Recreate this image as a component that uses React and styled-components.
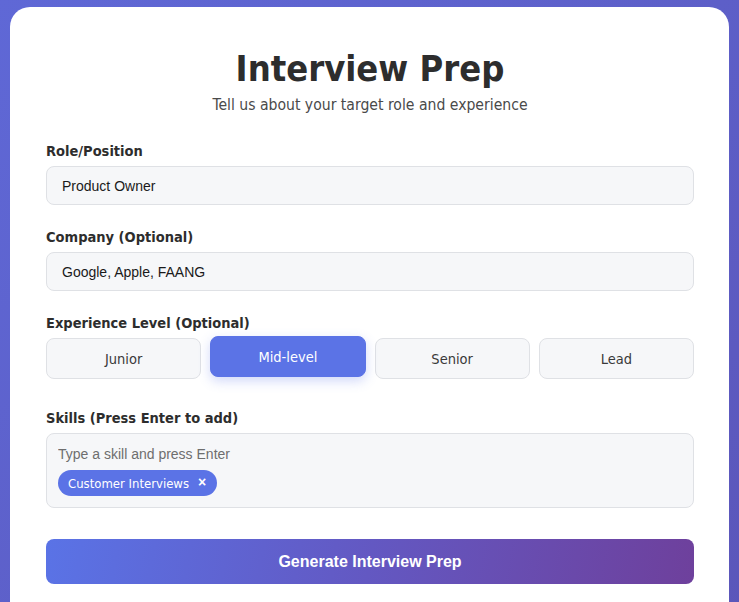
import React from 'react'
import styled, { createGlobalStyle } from 'styled-components';

const Global = createGlobalStyle`
  html, body { margin: 0; padding: 0; }
  body {
    font-family: 'DejaVu Sans Condensed', 'DejaVu Sans', sans-serif;
    background: linear-gradient(135deg, #5f68d6 0%, #5d5fc8 50%, #5b55b8 100%);
    min-height: 100vh;
  }
  * { box-sizing: border-box; }
`;

const levels = ['Junior', 'Mid-level', 'Senior', 'Lead'];

function App() {
  return (
    <Page>
      <Global />
      <Card>
        <Header>
          <h1>Interview Prep</h1>
          <p>Tell us about your target role and experience</p>
        </Header>

        <Group>
          <Label>Role/Position</Label>
          <Input defaultValue="Product Owner" />
        </Group>

        <Group>
          <Label>Company (Optional)</Label>
          <Input defaultValue="Google, Apple, FAANG" />
        </Group>

        <Group $gap="31px">
          <Label>Experience Level (Optional)</Label>
          <Levels>
            {levels.map(l => (
              <LevelButton key={l} $active={l === 'Mid-level'}>{l}</LevelButton>
            ))}
          </Levels>
        </Group>

        <Group $gap="31px">
          <Label>Skills (Press Enter to add)</Label>
          <SkillsBox>
            <SkillInput placeholder="Type a skill and press Enter" />
            <Tags>
              <Tag>
                Customer Interviews
                <Remove>×</Remove>
              </Tag>
            </Tags>
          </SkillsBox>
        </Group>

        <Submit>Generate Interview Prep</Submit>
      </Card>
    </Page>
  )
}

const Page = styled.div`
    padding: 7px 10px 0;
`;

const Card = styled.div`
    background: #fff;
    border-radius: 20px;
    padding: 40px 35px 40px 36px;
    min-height: 700px;
`;

const Header = styled.div`
    text-align: center;
    margin-bottom: 29px;
    h1 {
        margin: 0;
        font-size: 36px;
        font-weight: bold;
        color: #2d2d2d;
        line-height: 44px;
    }
    p {
        margin: 5px 0 0;
        font-size: 15.6px;
        color: #4a4a4a;
    }
`;

const Group = styled.div`
    margin-bottom: ${p => p.$gap || '24px'};
`;

const Label = styled.label`
    display: block;
    font-size: 14.5px;
    font-weight: bold;
    color: #2d2d2d;
    margin-bottom: 7px;
`;

const Input = styled.input`
    display: block;
    width: 100%;
    height: 39px;
    padding: 0 15px;
    border: 1px solid #dfe1e5;
    border-radius: 8px;
    background: #f6f7f9;
    font-family: 'Liberation Sans', Arial, sans-serif;
    font-size: 14px;
    color: #1a1a1a;
    outline: none;
`;

const Levels = styled.div`
    display: grid;
    grid-template-columns: repeat(4, 1fr);
    gap: 9px;
`;

const LevelButton = styled.button`
    height: 41px;
    border-radius: 8px;
    font-family: inherit;
    font-size: 14.5px;
    cursor: pointer;
    border: 1px solid ${p => p.$active ? '#5b73e6' : '#dfe1e5'};
    background: ${p => p.$active ? '#5b73e6' : '#f6f7f9'};
    color: ${p => p.$active ? '#fff' : '#3a3a3a'};
    transform: ${p => p.$active ? 'translateY(-2px)' : 'none'};
    box-shadow: ${p => p.$active ? '0 4px 12px rgba(102, 126, 234, 0.3)' : 'none'};
`;

const SkillsBox = styled.div`
    border: 1px solid #dfe1e5;
    border-radius: 8px;
    background: #f6f7f9;
    padding: 10px 11px 11px;
    min-height: 74px;
`;

const SkillInput = styled.input`
    display: block;
    width: 100%;
    border: none;
    background: transparent;
    outline: none;
    padding: 0;
    height: 20px;
    font-family: 'Liberation Sans', Arial, sans-serif;
    font-size: 14px;
    color: #1a1a1a;
    &::placeholder { color: #6e6e6e; }
`;

const Tags = styled.div`
    display: flex;
    flex-wrap: wrap;
    gap: 6px;
    margin-top: 6px;
`;

const Tag = styled.span`
    display: inline-flex;
    align-items: center;
    gap: 9px;
    height: 26px;
    padding: 0 11px 0 10px;
    border-radius: 13px;
    background: #5b73e6;
    color: #fff;
    font-size: 13px;
`;

const Remove = styled.span`
    font-family: 'Liberation Sans', Arial, sans-serif;
    font-size: 14px;
    font-weight: bold;
    line-height: 1;
    margin-top: -2px;
`;

const Submit = styled.button`
    display: block;
    width: 100%;
    height: 45px;
    border: none;
    border-radius: 8px;
    background: linear-gradient(100deg, #5a73e6 0%, #6358c2 50%, #6e409c 100%);
    color: #fff;
    font-family: 'Liberation Sans', Arial, sans-serif;
    font-size: 16px;
    font-weight: bold;
    cursor: pointer;
`;

export default App
